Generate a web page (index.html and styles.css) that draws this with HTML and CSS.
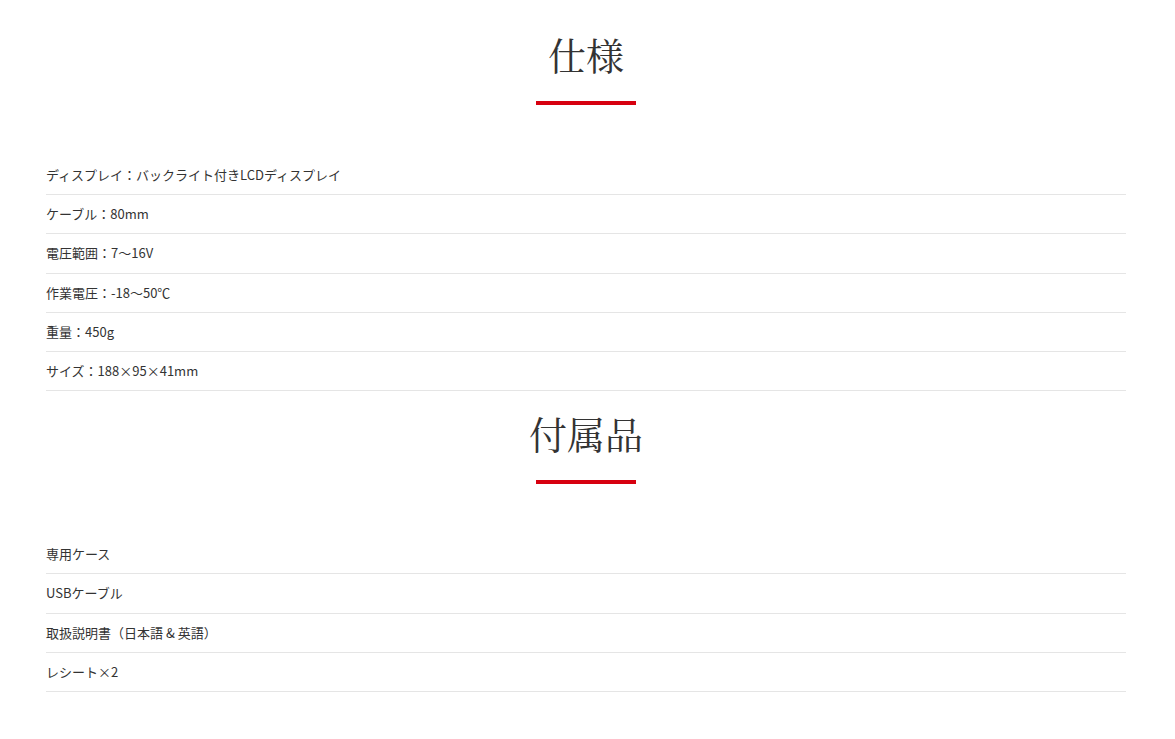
FILE: index.html
```html
<!DOCTYPE html>
<html lang="ja">
<head>
  <meta charset="UTF-8">
  <meta name="viewport" content="width=device-width, initial-scale=1.0">
  <title>仕様・付属品</title>
  <link rel="stylesheet" href="styles.css">
</head>
<body>
  <div class="container">
    <section class="spec">
      <h2 class="spec-title">仕様</h2>
      <div class="spec-bar"></div>
      <ul class="spec-list">
        <li>ディスプレイ：バックライト付きLCDディスプレイ</li>
        <li>ケーブル：80mm</li>
        <li>電圧範囲：7～16V</li>
        <li>作業電圧：-18～50℃</li>
        <li>重量：450g</li>
        <li>サイズ：188×95×41mm</li>
      </ul>
    </section>

    <section class="spec">
      <h2 class="spec-title">付属品</h2>
      <div class="spec-bar"></div>
      <ul class="spec-list">
        <li>専用ケース</li>
        <li>USBケーブル</li>
        <li>取扱説明書（日本語 &amp; 英語）</li>
        <li>レシート×2</li>
      </ul>
    </section>
  </div>
</body>
</html>
```

FILE: styles.css
```css
body {
  margin: 0;
  padding: 12px 0 40px;
  font-family: "Noto Sans CJK JP", "Noto Sans", sans-serif;
  color: #333;
  background: #fff;
}
.container {
  width: 1080px;
  margin: 0 0 0 46px;
}
.spec {
  padding-top: 19px;
}
.spec-title {
  margin: 0;
  text-align: center;
  font-family: "Noto Serif CJK JP", "Liberation Serif", serif;
  font-weight: normal;
  font-size: 38px;
  line-height: 46px;
  color: #333;
}
.spec-bar {
  width: 100px;
  height: 4px;
  background-color: #d7000f;
  margin: 24px auto 51px;
}
.spec-list {
  list-style: none;
  margin: 0;
  padding: 0;
}
.spec-list li {
  font-size: 13px;
  line-height: 20px;
  padding: 9.1px 0;
  border-bottom: 1px solid #e5e5e5;
}
```
